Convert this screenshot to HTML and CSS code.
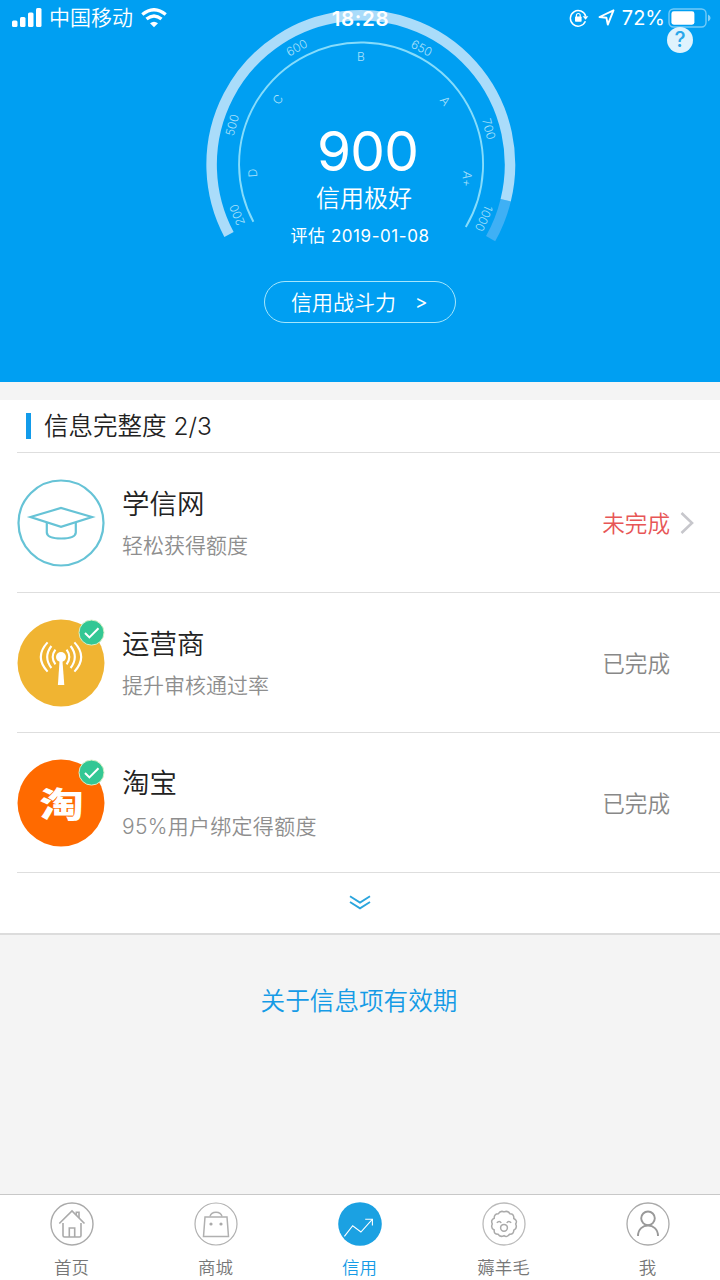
FILE: index.html
```html
<!doctype html>
<html lang="zh-CN">
  <head>
    <meta charset="utf-8">
    <title>信用</title>
    <link rel="stylesheet" href="styles.css">
  </head>
  <body>
    <header class="hero">
      <svg class="gauge" width="720" height="250" viewBox="0 0 720 250">
        <path class="track" d="M505.7 200.2 A149.2 149.2 0 0 1 490.6 238.6" />
        <path class="track-value" d="M229 234.5 A149.2 149.2 0 1 1 505.7 200.2" />
        <path class="inner-ring" d="M253.4 221.8 A122 122 0 1 1 465.8 227" />
        <g class="ticks">
          <text transform="translate(237 215) rotate(-112)" y="4.5">200</text>
          <text transform="translate(232 125) rotate(-75)" y="4.5">500</text>
          <text transform="translate(296.7 47.5) rotate(-29)" y="4.5">600</text>
          <text transform="translate(421.7 48) rotate(27)" y="4.5">650</text>
          <text transform="translate(489 129) rotate(75)" y="4.5">700</text>
          <text transform="translate(484 218.5) rotate(113)" y="4.5">1000</text>
        </g>
        <g class="grades">
          <text transform="translate(253 173) rotate(-94)" y="4">D</text>
          <text transform="translate(278 99.5) rotate(-52)" y="4">C</text>
          <text transform="translate(361 57) rotate(0)" y="4">B</text>
          <text transform="translate(445 101) rotate(53)" y="4">A</text>
          <text transform="translate(466.5 179) rotate(97)" y="4">A+</text>
        </g>
      </svg>

      <div class="status-bar">
        <div class="status-left">
          <svg width="31" height="20" viewBox="0 0 31 20" fill="#fff">
            <rect x="0" y="12.5" width="5.5" height="6.5" rx="1.5" />
            <rect x="8" y="9" width="5.5" height="10" rx="1.5" />
            <rect x="16" y="4.5" width="5.5" height="14.5" rx="1.5" />
            <rect x="24" y="0" width="5.5" height="19" rx="1.5" />
          </svg>
          <span class="carrier">中国移动</span>
          <svg width="26" height="20" viewBox="0 0 26 20" fill="none" stroke="#fff" stroke-width="3.3">
            <path d="M1.3 6.6 Q13 -3.2 24.7 6.6" />
            <path d="M5.5 11.1 Q13 4.9 20.5 11.1" />
            <path d="M13 19.3 L9 15.3 Q13 12 17 15.3 Z" fill="#fff" stroke="none" />
          </svg>
        </div>
        <div class="clock">18:28</div>
        <div class="status-right">
          <svg width="20" height="18" viewBox="0 0 20 18">
            <path d="M16.4 12.3 A7.8 7.8 0 1 1 16.7 7.2" fill="none" stroke="#fff" stroke-width="1.5" />
            <path d="M13.7 7.2 H19.3 L16.6 10.8 Z" fill="#fff" />
            <rect x="6" y="7.6" width="6.6" height="5.2" rx=".7" fill="#fff" />
            <path d="M7.4 8 V6.4 A1.9 1.9 0 0 1 11.2 6.4 V8" fill="none" stroke="#fff" stroke-width="1.2" />
          </svg>
          <svg class="arrow-icon" width="17" height="18" viewBox="0 0 17 18" fill="none" stroke="#fff" stroke-width="1.9" stroke-linejoin="round">
            <path d="M15.5 1.3 L1.5 8 L8.4 8.8 L9.8 15.6 Z" />
          </svg>
          <span class="percent">72%</span>
          <svg width="44" height="20" viewBox="0 0 44 20">
            <rect x="1" y="1" width="37" height="18" rx="4.5" fill="none" stroke="#fff" stroke-opacity=".45" stroke-width="1.4" />
            <rect x="3.4" y="3.3" width="23" height="13.4" rx="2.4" fill="#fff" />
            <path d="M40 6.5 Q42.6 7.8 42.6 10 Q42.6 12.2 40 13.5 Z" fill="#fff" fill-opacity=".5" />
          </svg>
        </div>
      </div>
      <div class="help">?</div>

      <div class="score">900</div>
      <div class="level">信用极好</div>
      <div class="date">评估 2019-01-08</div>
      <a class="power"><span>信用战斗力</span><span class="power-arrow">&gt;</span></a>
    </header>

    <main class="card">
      <h2 class="card-title">信息完整度 2/3</h2>

      <div class="item">
        <svg class="item-icon" viewBox="0 0 88 88" fill="none" stroke="#66c3d6" stroke-width="2.2">
          <circle cx="44" cy="44" r="42.5" />
          <path d="M13.5 38 L44 29 L75 38 L44 47.8 Z" />
          <path d="M29.8 43.4 V53.5 Q30 59.5 44.3 59.5 Q58.5 59.5 58.8 53.5 V43.4" />
        </svg>
        <div class="item-text">
          <div class="item-name">学信网</div>
          <div class="item-desc">轻松获得额度</div>
        </div>
        <div class="state todo">未完成</div>
        <svg class="chevron" width="14" height="24" viewBox="0 0 14 24" fill="none" stroke="#c7c7cc" stroke-width="2.6">
          <path d="M1.5 2 L12 12 L1.5 22" />
        </svg>
      </div>

      <div class="item">
        <svg class="item-icon" viewBox="0 0 88 88" fill="none">
          <circle cx="44" cy="44" r="43.5" fill="#f0b432" />
          <circle cx="44" cy="38" r="5" fill="#fff" />
          <path d="M42.6 41 H45.4 L47.3 66 H40.9 Z" fill="#fff" />
          <g stroke="#fff" stroke-width="2.1">
            <path d="M38.4 30.6 Q33 38 38.4 45.4" />
            <path d="M34.4 27 Q26 38 34.4 49" />
            <path d="M30.6 23.4 Q17 38 30.6 52.6" />
            <path d="M49.6 30.6 Q55 38 49.6 45.4" />
            <path d="M53.6 27 Q62 38 53.6 49" />
            <path d="M57.4 23.4 Q71 38 57.4 52.6" />
          </g>
          <circle cx="74.5" cy="13.6" r="12.5" fill="#33c794" stroke="#d9efc6" stroke-width="1" />
          <path d="M68 14 L72.4 18.4 L81.5 9.2" stroke="#fff" stroke-width="2" />
        </svg>
        <div class="item-text">
          <div class="item-name">运营商</div>
          <div class="item-desc">提升审核通过率</div>
        </div>
        <div class="state">已完成</div>
      </div>

      <div class="item">
        <svg class="item-icon" viewBox="0 0 88 88" fill="none">
          <circle cx="44" cy="44" r="43.5" fill="#ff6a00" />
          <text class="tao" transform="translate(44.5 57.5) scale(1.26 .96)">淘</text>
          <circle cx="74.5" cy="13.6" r="12.5" fill="#33c794" stroke="#d9efc6" stroke-width="1" />
          <path d="M68 14 L72.4 18.4 L81.5 9.2" stroke="#fff" stroke-width="2" />
        </svg>
        <div class="item-text">
          <div class="item-name">淘宝</div>
          <div class="item-desc wide">95%用户绑定得额度</div>
        </div>
        <div class="state">已完成</div>
      </div>

      <div class="more">
        <svg width="22" height="15" viewBox="0 0 22 15" fill="none" stroke="#2ba5dd" stroke-width="1.9">
          <path d="M1 1.3 L11 7.6 L21 1.3" />
          <path d="M1 7 L11 13.3 L21 7" />
        </svg>
      </div>
    </main>

    <a class="about">关于信息项有效期</a>

    <nav class="tabs">
      <a class="tab">
        <svg width="44" height="44" viewBox="0 0 44 44" fill="none" stroke="#aaa" stroke-width="1.6">
          <circle cx="22" cy="22" r="21" stroke-width="1.4" />
          <path d="M9.3 21.5 L22 9 L34.5 21.5" />
          <path d="M26.3 13 V10.3 H29 V16" />
          <path d="M13 21 V33.5 Q13 35 14.5 35 H29.5 Q31 35 31 33.5 V21" />
          <path d="M19.3 35 V26 H24.7 V35" />
        </svg>
        <span>首页</span>
      </a>
      <a class="tab">
        <svg width="44" height="44" viewBox="0 0 44 44" fill="none" stroke="#b0b0b0" stroke-width="1.5">
          <circle cx="22" cy="22" r="21" stroke-width="1.2" />
          <path d="M11 15 H33 L34.5 34.5 H9.5 Z" />
          <path d="M16 14.5 Q17 10.2 22 10.2 Q27 10.2 28 14.5" />
          <circle cx="17" cy="22" r="1.6" fill="#aaa" stroke="none" />
          <circle cx="27" cy="22" r="1.6" fill="#aaa" stroke="none" />
        </svg>
        <span>商城</span>
      </a>
      <a class="tab active">
        <svg width="44" height="44" viewBox="0 0 44 44" fill="none" stroke="#fff" stroke-width="1.1">
          <circle cx="22" cy="22" r="21.8" fill="#1ba1e2" stroke="none" />
          <path d="M6.4 34.4 L14.7 23.7 L22.9 30 L34.3 17.3" />
          <path d="M27.2 17.2 H34.4 V23.5" />
        </svg>
        <span>信用</span>
      </a>
      <a class="tab">
        <svg width="44" height="44" viewBox="0 0 44 44" fill="none" stroke="#aaa" stroke-width="1.5">
          <circle cx="22" cy="22" r="21" stroke="#bbb" stroke-width="1.3" />
          <path d="M22 9.9 Q26 8.2 28 11.8 Q32.2 11.8 31.8 16.5 Q35.8 18.5 33.7 22 Q35.6 26.5 31.8 28.2 Q31.8 32.6 27.5 32.2 Q25 35.8 22 33.7 Q18 35.6 16 32.2 Q11.8 32.2 12.2 28 Q8.4 26 10.3 22 Q8.4 18 12.2 16.3 Q12 11.8 16.2 11.8 Q18.5 8.2 22 9.9 Z" />
          <circle cx="22" cy="25.8" r="3.4" />
          <path d="M14.8 20.8 Q17.5 18 19.2 21" />
          <path d="M24.8 21 Q26.5 18 29.2 20.8" />
        </svg>
        <span>薅羊毛</span>
      </a>
      <a class="tab">
        <svg width="44" height="44" viewBox="0 0 44 44" fill="none" stroke="#999" stroke-width="1.9">
          <circle cx="22" cy="22" r="21" stroke="#aaa" stroke-width="1.3" />
          <circle cx="22" cy="16.3" r="6.8" />
          <path d="M12 34 C12 20 32 20 32 34" />
        </svg>
        <span>我</span>
      </a>
    </nav>
  </body>
</html>
```

FILE: styles.css
```css
* {
  box-sizing: border-box;
}

body {
  margin: 0;
  width: 720px;
  height: 1280px;
  display: flex;
  flex-direction: column;
  overflow: hidden;
  background: #f4f4f4;
  color: #222;
  font-family: Inter, "Noto Sans CJK SC", sans-serif;
  font-weight: 350;
}

svg {
  display: block;
  flex: none;
}

.hero {
  position: relative;
  height: 382px;
  flex: none;
  display: flex;
  flex-direction: column;
  align-items: center;
  padding-top: 120px;
  background: #009ff2;
  color: #fff;
}

.gauge {
  position: absolute;
  left: 0;
  top: 0;
}

.track, .track-value {
  fill: none;
  stroke-width: 10.5px;
}

.track {
  stroke: #3fb0f5;
}

.track-value {
  stroke: #aadcfa;
}

.inner-ring {
  fill: none;
  stroke: #86dcfb;
  stroke-width: 1.9px;
}

.ticks text, .grades text {
  fill: #a8e0fb;
  font-size: 12px;
  text-anchor: middle;
}

.ticks text {
  font-weight: 300;
}

.status-bar {
  position: absolute;
  left: 0;
  right: 0;
  top: 0;
  height: 36px;
  padding: 0 8px 0 12px;
  display: grid;
  grid-template-columns: 1fr auto 1fr;
  align-items: center;
  font-size: 20px;
}

.status-left, .status-right {
  display: flex;
  align-items: center;
}

.status-right {
  justify-content: flex-end;
}

.carrier {
  margin: 0 8px 0 6px;
  font-size: 21px;
  line-height: 36px;
}

.clock {
  margin-right: 3px;
  font-size: 20.5px;
  font-weight: 600;
  letter-spacing: .7px;
}

.arrow-icon {
  margin: 0 7px 0 9px;
}

.percent {
  margin-right: 3px;
  font-weight: 400;
}

.help {
  position: absolute;
  left: 667px;
  top: 27px;
  width: 26px;
  height: 26px;
  border-radius: 50%;
  background: #dff3fd;
  color: #2aa7ea;
  font-size: 21px;
  font-weight: 500;
  line-height: 26px;
  text-align: center;
}

.score {
  height: 62px;
  margin-left: 15px;
  font-size: 55px;
  font-weight: 400;
  letter-spacing: -.8px;
  line-height: 62px;
}

.level {
  margin-top: 2px;
  margin-left: 8px;
  font-size: 24px;
  line-height: 30px;
}

.date {
  margin-top: 9px;
  font-size: 17px;
  font-weight: 400;
  letter-spacing: .55px;
  line-height: 26px;
}

.power {
  width: 192px;
  height: 42px;
  margin-top: 32px;
  padding: 0 0 3px 26px;
  display: flex;
  align-items: center;
  gap: 19px;
  border: 1px solid #a5e6fc;
  border-radius: 21px;
  font-size: 21px;
}

.power-arrow {
  padding-top: 4px;
  font-size: 19px;
  font-weight: 400;
}

.card {
  margin-top: 18px;
  background: #fff;
  border-bottom: 2px solid #dcdcdc;
}

.card-title {
  height: 52px;
  margin: 0;
  padding-left: 26px;
  display: flex;
  align-items: center;
  gap: 13px;
  font-size: 24.5px;
  font-weight: 350;
  line-height: 36px;
}

.card-title::before {
  content: "";
  width: 5px;
  height: 26px;
  background: #129bea;
}

.item, .more {
  height: 140px;
  margin-left: 17px;
  border-top: 1px solid #dedede;
}

.item {
  display: flex;
  align-items: center;
  padding-right: 50px;
  position: relative;
}

.item-icon {
  width: 88px;
  height: 88px;
}

.tao {
  fill: #fff;
  font-size: 35px;
  font-weight: 900;
  text-anchor: middle;
}

.item-text {
  flex: 1;
  padding-left: 17px;
}

.item-name {
  font-size: 27.5px;
  line-height: 40px;
}

.item-desc {
  margin-top: 6px;
  color: #8e8e8e;
  font-size: 21px;
  line-height: 32px;
}

.wide {
  padding-top: 2px;
  letter-spacing: .3px;
}

.state {
  color: #888;
  font-size: 22.6px;
}

.todo {
  color: #e75656;
}

.chevron {
  position: absolute;
  right: 26px;
}

.more {
  height: 61px;
  display: flex;
  align-items: center;
  justify-content: center;
  padding: 0 17px 1px 0;
}

.about {
  margin: 48px 2px 0 0;
  color: #159be6;
  font-size: 24.6px;
  line-height: 36px;
  text-align: center;
}

.tabs {
  height: 86px;
  margin-top: auto;
  display: grid;
  grid-template-columns: repeat(5, 1fr);
  background: #fff;
  border-top: 1px solid #c8c8c8;
}

.tab {
  display: flex;
  flex-direction: column;
  align-items: center;
  padding: 7px 1px 0 0;
  gap: 9px;
  color: #777;
  font-size: 17.5px;
  line-height: 26px;
}

.active {
  color: #159be6;
}
```
